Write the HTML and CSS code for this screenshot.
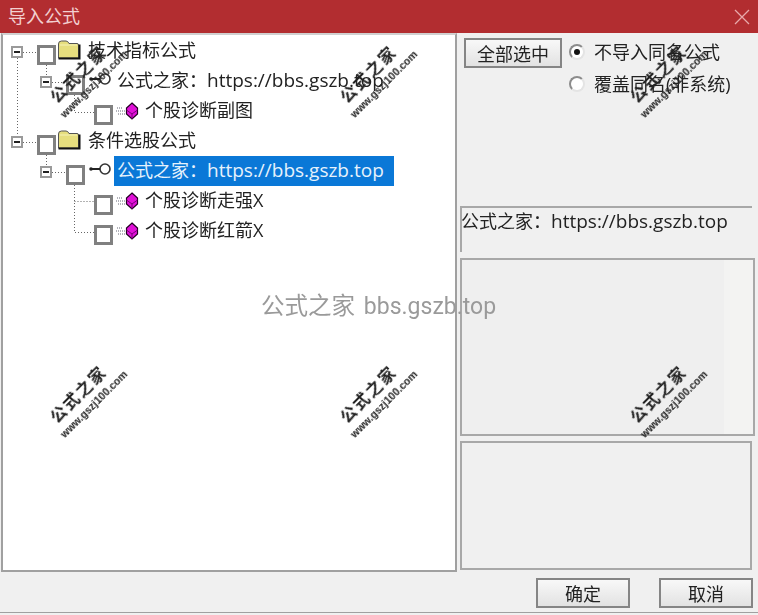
FILE: index.html
```html
<!DOCTYPE html>
<html lang="zh-CN">
<head>
<meta charset="utf-8">
<title>导入公式</title>
<link rel="stylesheet" href="styles.css">
</head>
<body>
<div class="window">
  <header class="titlebar">
    <span class="title">导入公式</span>
    <svg class="close" width="16" height="16" viewBox="0 0 16 16"><path d="M1 1 15 15M15 1 1 15" stroke="#e8a9aa" stroke-width="1.3" fill="none"/></svg>
  </header>
  <main class="content">
    <section class="tree">
      <svg class="links" width="452" height="536" viewBox="0 0 452 536">
        <path d="M14.500 23V101M20 17.500H34M43.500 30V41M49 47.500H63M71.500 60V77.500H91M20 107.500H34M43.500 120V131M49 137.500H63M71.500 150V197.500H91M71.500 166.500H91" stroke="#666" stroke-dasharray="1 2" fill="none"/>
      </svg>
      <div class="row lvl0">
        <span class="exp"></span><span class="chk"></span>
        <svg class="folder" width="24" height="20" viewBox="0 0 24 20"><path d="M1.500 18V4Q1.500 1 4.500 1H9Q11 1 12 3.500H20Q21.500 3.500 21.500 5V18Z" fill="#e6de7e" stroke="#555" stroke-width="1"/><path d="M1.500 18.500H22.500V4.500" stroke="#111" stroke-width="2" fill="none"/><path d="M3 5H20" stroke="#f6f2b8"/></svg>
        <span class="label">技术指标公式</span>
      </div>
      <div class="row lvl1">
        <span class="exp"></span><span class="chk"></span>
        <svg class="key" width="24" height="14" viewBox="0 0 24 14"><circle cx="17" cy="7" r="5" fill="#fff" stroke="#333" stroke-width="1.600"/><path d="M3 7H12" stroke="#222" stroke-width="2" fill="none"/><circle cx="3" cy="7" r="1.800" fill="#222"/></svg>
        <span class="label">公式之家：<span class="url">https://bbs.gszb.top</span></span>
      </div>
      <div class="row lvl2">
        <span class="chk"></span>
        <svg class="gem" width="24" height="18" viewBox="0 0 24 18"><path d="M1 6H7M0 9H9M2 12H9" stroke="#667" stroke-dasharray="1 1" fill="none"/><path d="M16 1 21.500 6V12L16 17 10.500 12V6Z" fill="#e010d8" stroke="#200020" stroke-width="1.200"/><path d="M10.500 8 16 12 21.500 8M16 12V17" stroke="#7a0078" fill="none"/></svg>
        <span class="label">个股诊断副图</span>
      </div>
      <div class="row lvl0">
        <span class="exp"></span><span class="chk"></span>
        <svg class="folder" width="24" height="20" viewBox="0 0 24 20"><path d="M1.500 18V4Q1.500 1 4.500 1H9Q11 1 12 3.500H20Q21.500 3.500 21.500 5V18Z" fill="#e6de7e" stroke="#555" stroke-width="1"/><path d="M1.500 18.500H22.500V4.500" stroke="#111" stroke-width="2" fill="none"/><path d="M3 5H20" stroke="#f6f2b8"/></svg>
        <span class="label">条件选股公式</span>
      </div>
      <div class="row lvl1">
        <span class="exp"></span><span class="chk"></span>
        <svg class="key" width="24" height="14" viewBox="0 0 24 14"><circle cx="17" cy="7" r="5" fill="#fff" stroke="#333" stroke-width="1.600"/><path d="M3 7H12" stroke="#222" stroke-width="2" fill="none"/><circle cx="3" cy="7" r="1.800" fill="#222"/></svg>
        <span class="label selected">公式之家：<span class="url">https://bbs.gszb.top</span></span>
      </div>
      <div class="row lvl2">
        <span class="chk"></span>
        <svg class="gem" width="24" height="18" viewBox="0 0 24 18"><path d="M1 6H7M0 9H9M2 12H9" stroke="#667" stroke-dasharray="1 1" fill="none"/><path d="M16 1 21.500 6V12L16 17 10.500 12V6Z" fill="#e010d8" stroke="#200020" stroke-width="1.200"/><path d="M10.500 8 16 12 21.500 8M16 12V17" stroke="#7a0078" fill="none"/></svg>
        <span class="label">个股诊断走强X</span>
      </div>
      <div class="row lvl2">
        <span class="chk"></span>
        <svg class="gem" width="24" height="18" viewBox="0 0 24 18"><path d="M1 6H7M0 9H9M2 12H9" stroke="#667" stroke-dasharray="1 1" fill="none"/><path d="M16 1 21.500 6V12L16 17 10.500 12V6Z" fill="#e010d8" stroke="#200020" stroke-width="1.200"/><path d="M10.500 8 16 12 21.500 8M16 12V17" stroke="#7a0078" fill="none"/></svg>
        <span class="label">个股诊断红箭X</span>
      </div>
    </section>
    <aside class="side">
      <div class="controls">
        <button class="btn select-all">全部选中</button>
        <div class="radios">
          <div class="radio"><span class="dot on"></span><span class="radio-text">不导入同名公式</span></div>
          <div class="radio"><span class="dot"></span><span class="radio-text">覆盖同名(非系统)</span></div>
        </div>
      </div>
      <div class="info">公式之家：<span class="url">https://bbs.gszb.top</span></div>
      <div class="panel large"></div>
      <div class="panel small"></div>
    </aside>
  </main>
  <footer class="actions">
    <button class="btn">确定</button>
    <button class="btn">取消</button>
  </footer>
</div>
<div class="banner">公式之家 <span class="banner-url">bbs.gszb.top</span></div>
<div class="mark m1"><b>公式之家</b><i>www.gszj100.com</i></div>
<div class="mark m2"><b>公式之家</b><i>www.gszj100.com</i></div>
<div class="mark m3"><b>公式之家</b><i>www.gszj100.com</i></div>
<div class="mark m4"><b>公式之家</b><i>www.gszj100.com</i></div>
<div class="mark m5"><b>公式之家</b><i>www.gszj100.com</i></div>
<div class="mark m6"><b>公式之家</b><i>www.gszj100.com</i></div>
</body>
</html>
```
FILE: styles.css
```css
* { box-sizing: border-box; }
html, body { margin: 0; height: 100%; overflow: hidden; }
body {
  position: relative;
  width: 758px;
  height: 615px;
  background: #f0f0f0;
  color: #222;
  font-family: "Open Sans", "Noto Sans CJK SC", sans-serif;
  font-size: 18px;
}
.window {
  display: flex;
  flex-direction: column;
  height: 613px;
  border-bottom: 1px solid #a0a0a0;
  filter: blur(0.35px);
}
.titlebar {
  flex: 0 0 33px;
  display: flex;
  align-items: center;
  justify-content: space-between;
  padding: 0 8px;
  background: #b22d30;
  color: #f2d0d0;
}
.title { font-size: 18px; line-height: 1; padding-bottom: 2px; }
.close { display: block; }
.content {
  flex: 0 0 539px;
  display: flex;
  gap: 2px;
  padding: 0 0 0 1px;
}
.tree {
  position: relative;
  flex: 0 0 456px;
  padding-top: 1px;
  background: #fff;
  border: 2px solid #a0a0a0;
  border-top-color: #d0d0d0;
}
.links { position: absolute; left: 0; top: 0; }
.row {
  position: relative;
  display: flex;
  align-items: center;
  height: 30px;
}
.lvl0 { padding-left: 8px; }
.lvl1 { padding-left: 37px; }
.lvl2 { padding-left: 91px; }
.exp {
  position: relative;
  flex: 0 0 12px;
  height: 12px;
  margin: 2px 14px 0 0;
  background: #fff;
  border: 2px solid #9a9a9a;
}
.exp::after {
  content: "";
  position: absolute;
  left: 1px;
  right: 1px;
  top: 3px;
  height: 2px;
  background: #222;
}
.chk {
  flex: 0 0 19px;
  height: 20px;
  margin-top: 8px;
  background: #fff;
  border: 3px solid #808080;
}
.folder { flex: none; margin: -2px 0 0 1px; }
.key { flex: none; margin: -4px 0 0 3px; }
.gem { flex: none; margin: 0 0 0 3px; }
.label { white-space: nowrap; line-height: 28px; height: 30px; color: #222; padding: 0 4px; }
.url { font-size: 19px; }
.lvl0 .label { margin-left: 3px; }
.lvl1 .label { margin-left: 2px; padding-left: 3px; }
.lvl2 .label { margin-left: 1px; }
.selected { width: 280px; background: #0a78d7; color: #e6f2fc; }
.side { flex: 1; display: flex; flex-direction: column; padding-right: 3px; }
.controls {
  display: flex;
  gap: 7px;
  height: 173px;
  padding: 5px 0 0 5px;
}
.btn {
  width: 94px;
  height: 30px;
  padding: 0;
  border: 2px solid #858585;
  background: linear-gradient(#f8f8f8, #e2e2e2);
  color: #222;
  font: 18px/1 "Noto Sans CJK SC", sans-serif;
}
.select-all { width: 98px; }
.radios { display: flex; flex-direction: column; gap: 2px; margin-top: -1px; }
.radio { display: flex; align-items: center; gap: 9px; height: 30px; white-space: nowrap; color: #222; }
.radio-text { padding-bottom: 2px; }
.dot {
  flex: 0 0 16px;
  height: 16px;
  border-radius: 50%;
  background: #fff;
  border: 2px solid #e4e4e4;
  border-top-color: #8c8c8c;
  border-left-color: #8c8c8c;
  display: flex;
  align-items: center;
  justify-content: center;
}
.dot.on::after { content: ""; width: 6px; height: 6px; border-radius: 50%; background: #111; }
.info {
  height: 46px;
  margin-left: 1px;
  margin-right: 3px;
  border-top: 2px solid #a8a8a8;
  border-left: 2px solid #a8a8a8;
  line-height: 26px;
  white-space: nowrap;
  text-indent: -1px;
  color: #222;
}
.panel { margin-left: 1px; border: 2px solid #a8a8a8; }
.large { height: 178px; margin-top: 6px; background: linear-gradient(90deg, #efefef 90%, #f3f3f2 90%); }
.small { height: 129px; margin-top: 5px; margin-right: 3px; }
.actions {
  flex: 1;
  display: flex;
  justify-content: flex-end;
  gap: 29px;
  padding: 6px 5px 0 0;
}
.banner {
  position: absolute;
  left: 261px;
  top: 290px;
  color: #9a9a9a;
  font-family: Roboto, "Noto Sans CJK SC", sans-serif;
  font-size: 23.500px;
  line-height: 32px;
  white-space: nowrap;
}
.banner-url { font-size: 23px; margin-left: 3px; }
.mark {
  position: absolute;
  width: 110px;
  display: flex;
  flex-direction: column;
  align-items: center;
  transform: rotate(-45deg);
  color: #222;
  line-height: 1;
}
.mark b { font: 700 16px/18px "Noto Sans CJK SC", sans-serif; letter-spacing: 2px; }
.mark i { font: 700 10.500px/12px "Liberation Sans", sans-serif; margin-top: 4px; margin-left: 8px; }
.m1 { left: 28px; top: 62px; }
.m2 { left: 318px; top: 62px; }
.m3 { left: 608px; top: 62px; }
.m4 { left: 28px; top: 382px; }
.m5 { left: 318px; top: 382px; }
.m6 { left: 608px; top: 382px; }
```
